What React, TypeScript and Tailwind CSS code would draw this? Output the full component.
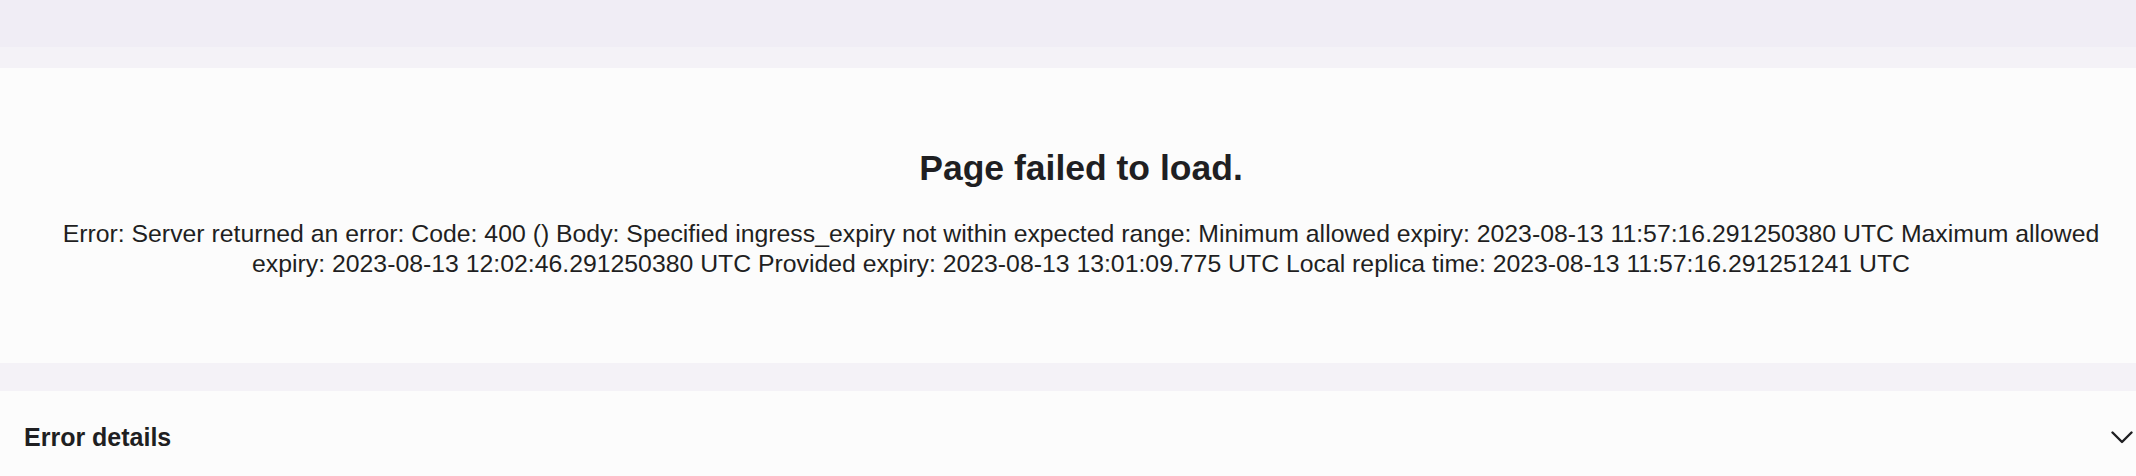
const message =
  "Error: Server returned an error: Code: 400 () Body: Specified ingress_expiry not within expected range: Minimum allowed expiry: 2023-08-13 11:57:16.291250380 UTC Maximum allowed expiry: 2023-08-13 12:02:46.291250380 UTC Provided expiry: 2023-08-13 13:01:09.775 UTC Local replica time: 2023-08-13 11:57:16.291251241 UTC";

/** Small chevron used by the accordion header */
function Chevron() {
  return (
    <svg width="22" height="13" viewBox="0 0 22 13" fill="none" aria-hidden="true">
      <polyline
        points="1.5,1.5 11,11 20.5,1.5"
        stroke="#1f1f22"
        strokeWidth="2.4"
        strokeLinecap="round"
        strokeLinejoin="round"
      />
    </svg>
  );
}

export default function App() {
  return (
    <div className="min-h-[476px] bg-[#f4f2f7] text-[#1f1f22] font-['Liberation_Sans',Arial,sans-serif]">
      {/* Header strip */}
      <div className="h-[47px] bg-[#f0edf5]" />

      <div className="pt-[21px]">
        {/* Error card */}
        <section className="h-[295px] bg-[#fcfcfc] flex flex-col items-center pl-[56px] pr-[30px] pt-[78px]">
          <h1 className="text-[35.5px] font-bold leading-[44px]">Page failed to load.</h1>
          <p className="mt-[29px] text-[24.8px] leading-[30px] text-center">{message}</p>
        </section>

        {/* Details accordion */}
        <section className="mt-[28px] bg-[#fcfcfc] h-[85px]">
          <button className="w-full flex items-center justify-between pl-[24px] pr-[3px] pt-[30px]">
            <span className="text-[25px] font-bold leading-[32px]">Error details</span>
            <Chevron />
          </button>
        </section>
      </div>
    </div>
  );
}
